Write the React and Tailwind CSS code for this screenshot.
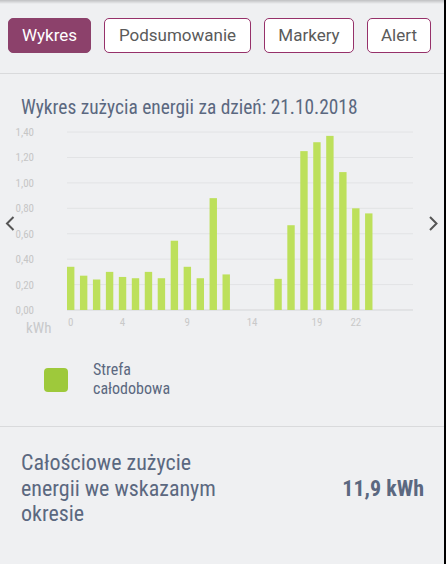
const tabs = [
  { label: 'Wykres', w: 'w-[83px]', active: true },
  { label: 'Podsumowanie', w: 'w-[147px]' },
  { label: 'Markery', w: 'w-[90px]' },
  { label: 'Alert', w: 'w-[64px]' },
];

const values = [
  0.34, 0.27, 0.24, 0.3, 0.26, 0.25, 0.3, 0.25, 0.545, 0.34, 0.25, 0.88,
  0.28, 0, 0, 0, 0.245, 0.667, 1.25, 1.32, 1.37, 1.085, 0.8, 0.76,
];

const BASE = 310;
const SCALE = 127.1;
const ticks = [0, 0.2, 0.4, 0.6, 0.8, 1.0, 1.2, 1.4];
const xLabels = [0, 4, 9, 14, 19, 22];

const Chart = () => (
  <svg width="444" height="221" viewBox="0 119 444 221" className="block">
    {ticks.map((t) => {
      const y = BASE - t * SCALE;
      return (
        <g key={t}>
          <line x1="67" x2="413" y1={y} y2={y} stroke={t === 0 ? '#d4d5d7' : '#e2e3e5'} strokeWidth="1" />
          <text x="34" y={y + 4} textAnchor="end" fontSize="11" fill="#c6c6c6">
            {t.toFixed(2).replace('.', ',')}
          </text>
        </g>
      );
    })}
    {values.map((v, i) =>
      v > 0 ? (
        <rect key={i} x={67 + i * 12.96} y={BASE - v * SCALE} width="7.4" height={v * SCALE} fill="#bde05b" />
      ) : null
    )}
    {xLabels.map((n) => (
      <text key={n} x={70.7 + n * 12.96} y="326" textAnchor="middle" fontSize="11" fill="#c9c9c9">
        {n}
      </text>
    ))}
    <text x="26" y="333" fontSize="15" fill="#c8c9cb">kWh</text>
    {/* slider arrows */}
    <polyline points="13.5,217 7,223.5 13.5,230" fill="none" stroke="#555" strokeWidth="2" />
    <polyline points="430,217 436.5,223.5 430,230" fill="none" stroke="#555" strokeWidth="2" />
  </svg>
);

export default function App() {
  return (
    <div className="relative w-[446px] h-[564px] overflow-hidden bg-[#eff0f2] border-r-2 border-black font-['Roboto_Condensed',Roboto,sans-serif] text-[#5b6880]">
      <div className="absolute top-0 left-0 right-0 h-[4px] bg-linear-to-b from-black/20 to-transparent"></div>

      {/* Tabs */}
      <div className="h-[74px] border-b border-[#d9dadc] flex items-start gap-[13px] pl-[8px] pt-[18px]">
        {tabs.map((t) => (
          <button
            key={t.label}
            className={`${t.w} h-[35px] rounded-[5px] border text-[17px] font-['Roboto',sans-serif] ${
              t.active ? 'bg-[#8c416b] border-[#8c416b] text-white' : 'bg-white border-[#96316a] text-[#5a5a5a]'
            }`}
          >
            {t.label}
          </button>
        ))}
      </div>

      {/* Chart */}
      <h2 className="mt-[22px] pl-[21px] text-[19.4px] leading-[23px] whitespace-nowrap">
        Wykres zużycia energii za dzień: 21.10.2018
      </h2>
      <Chart />

      {/* Legend */}
      <div className="h-[87px] border-b border-[#d9dadc] pt-[21px] pl-[44px]">
        <div className="flex items-center gap-[25px]">
          <div className="w-6 h-6 rounded-[4px] bg-[#9ec93b]"></div>
          <div className="text-[16px] leading-[18.5px]">
            Strefa<br />całodobowa
          </div>
        </div>
      </div>

      {/* Summary */}
      <div className="flex items-center justify-between pl-[21px] pr-[20px] pt-[23px]">
        <p className="w-[205px] text-[22px] leading-[25.5px]">
          Całościowe zużycie energii we wskazanym okresie
        </p>
        <span className="text-[22px] font-bold">11,9 kWh</span>
      </div>
    </div>
  );
}
